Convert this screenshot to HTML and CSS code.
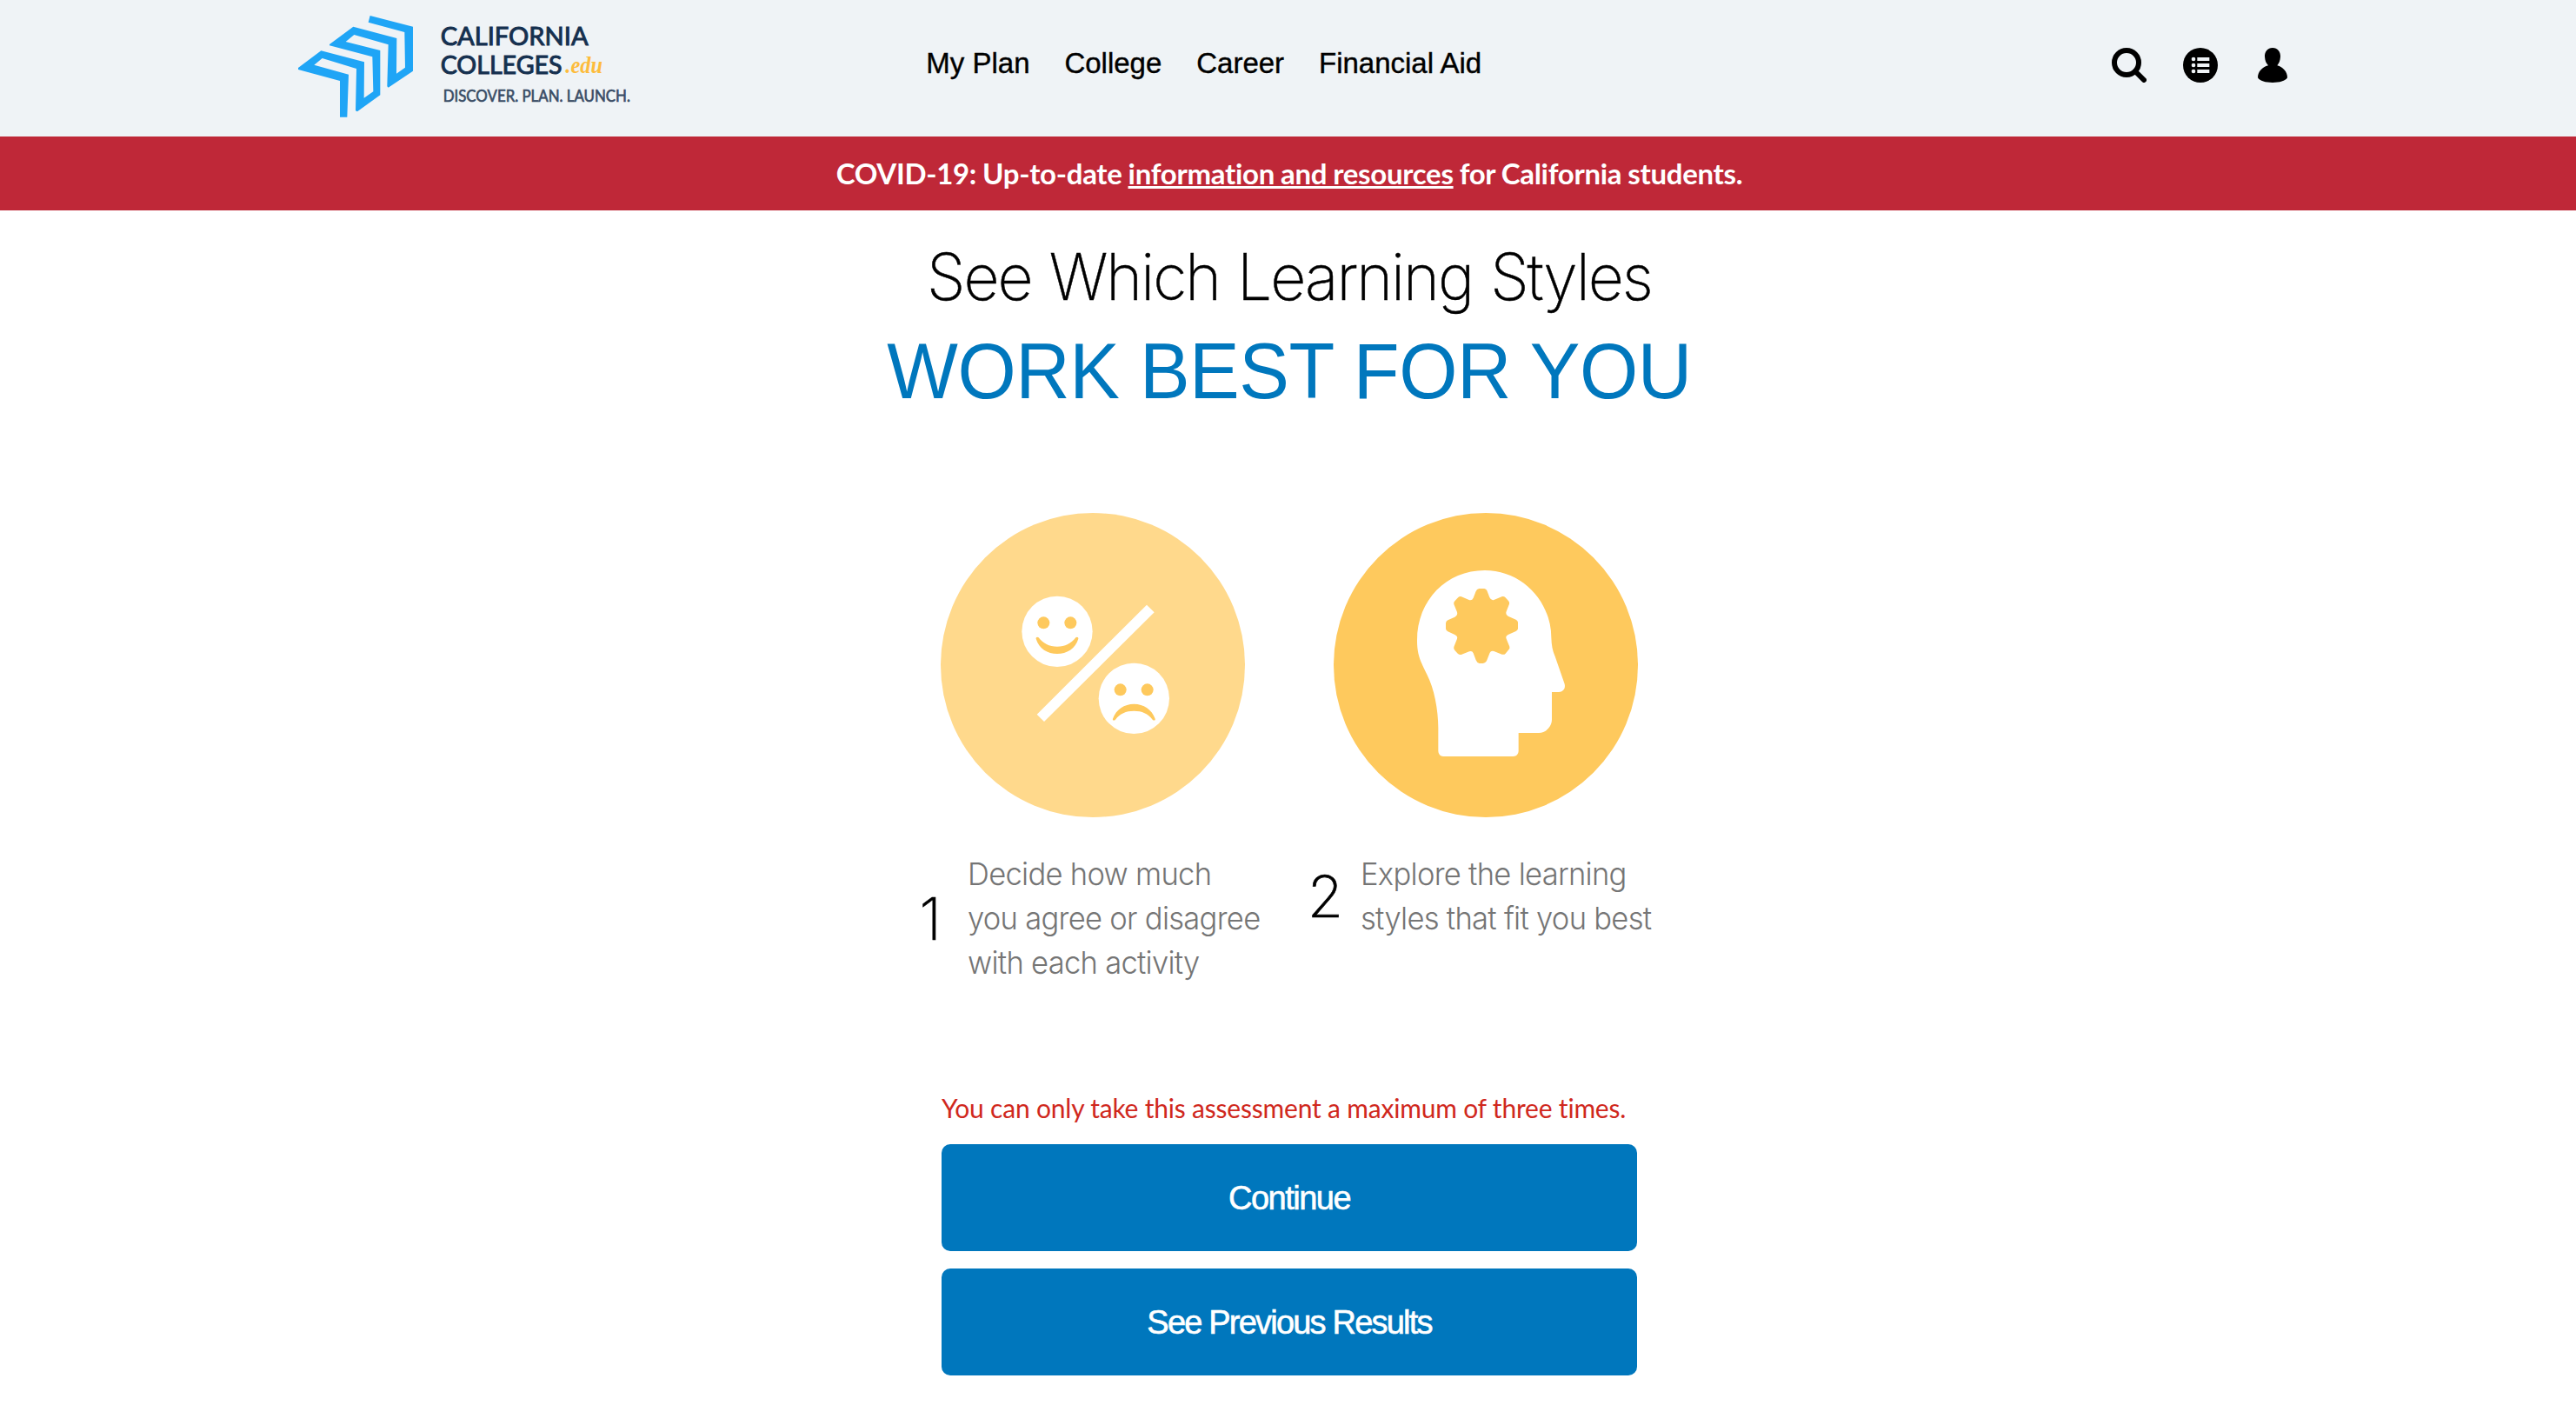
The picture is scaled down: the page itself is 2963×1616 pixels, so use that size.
FILE: index.html
```html
<!DOCTYPE html>
<html lang="en">
<head>
<meta charset="utf-8">
<title>Learning Styles</title>
<link rel="stylesheet" href="styles.css">
</head>
<body>
<header class="header">
  <svg class="logo" viewBox="39 50 1150 360" role="img" aria-label="California Colleges">
    <path class="logo-mark" d="M287 56L435 94V247L350 304L346 300L350 156L232 122L203 146L322 176V330L243 387L237 384L240 239L122 203L94 226L213 259L208 406H183V281L39 242V236L118 177L267 216L266 340L298 318L295 198L147 159V155L229 94L379 134L378 256L408 235L406 113L281 79Z"/>
    <text class="logo-name" x="530" y="157" textLength="510" lengthAdjust="spacingAndGlyphs">CALIFORNIA</text>
    <text class="logo-name" x="530" y="256" textLength="420" lengthAdjust="spacingAndGlyphs">COLLEGES</text>
    <text class="logo-edu" x="961" y="254" textLength="128" lengthAdjust="spacingAndGlyphs">.edu</text>
    <text class="logo-tag" x="539" y="354" textLength="646" lengthAdjust="spacingAndGlyphs">DISCOVER. PLAN. LAUNCH.</text>
  </svg>
  <nav class="nav">
    <a>My Plan</a><a>College</a><a>Career</a><a>Financial Aid</a>
  </nav>
  <div class="tools">
    <svg class="tool" viewBox="0 0 120 120"><circle cx="51" cy="51" r="42" fill="none" stroke="#000" stroke-width="18"/><path d="M81 81L111 111" stroke="#000" stroke-width="18" stroke-linecap="round"/></svg>
    <svg class="tool" viewBox="0 0 120 120"><circle cx="60" cy="60" r="60"/><g fill="#eff3f6"><circle cx="36" cy="39" r="7"/><circle cx="36" cy="60" r="7"/><circle cx="36" cy="81" r="7"/><path d="M49 33H91V45H49ZM49 54H91V66H49ZM49 75H91V87H49Z"/></g></svg>
    <svg class="tool tool-user" viewBox="0 0 102 120"><path d="M51 0C68 0 79 13 78 31C77 45 73 54 67 61C87 66 102 83 102 103C95 115 75 120 51 120S7 115 0 103C0 83 15 66 36 61C29 54 25 45 24 31C23 13 34 0 51 0Z"/></svg>
  </div>
</header>
<div class="banner">COVID-19: Up-to-date <a class="banner-link">information and resources</a> for California students.</div>
<main class="main">
  <h1 class="title"><span class="title-lead">See Which Learning Styles</span><span class="title-strong">WORK BEST FOR YOU</span></h1>
  <div class="steps">
    <section class="step">
      <svg class="step-art" viewBox="0 0 1050 1050">
        <circle cx="525" cy="525" r="525" fill="#ffd98c"/>
        <path fill="#fff" d="M711 317L737 343L357 720L332 695Z"/>
        <g fill="#fff"><circle cx="402" cy="409" r="122"/><circle cx="667" cy="640" r="122"/></g>
        <g fill="#fec95d"><circle cx="355" cy="379" r="21"/><circle cx="448" cy="379" r="21"/><circle cx="620" cy="610" r="21"/><circle cx="713" cy="610" r="21"/>
        <path d="M338 430C354 451 374 461 402 461S450 451 466 430C470 426 476 428 475 434C465 468 435 486 402 486S339 468 329 434C328 428 334 426 338 430Z"/>
        <path d="M603 713C619 692 639 683 667 683S715 692 731 713C735 718 742 716 740 710C729 678 700 659 667 659S605 678 594 710C592 716 599 718 603 713Z"/></g>
      </svg>
      <div class="step-row"><span class="step-num step-num-one">1</span><p class="step-text">Decide how much<br>you agree or disagree<br>with each activity</p></div>
    </section>
    <section class="step">
      <svg class="step-art" viewBox="0 0 1050 1050">
        <circle cx="525" cy="525" r="525" fill="#fec95d"/>
        <path fill="#fff" d="M521 198C651 198 751 306 751 430C752 456 755 476 764 495L797 590C801 607 791 618 777 618H753V712C753 740 730 759 708 759H638V822Q637 839 620 840H378Q362 839 361 822V742C361 680 347 605 322 557C300 512 288 490 288 440C288 300 390 198 521 198Z"/>
        <path fill="#fec95d" d="M502 261H520Q526 262 529 268L538 291Q543 303 553 300L582 288Q588 287 592 291L603 303Q608 308 606 314L596 340Q592 350 602 356L629 368Q635 371 636 377V400Q635 405 629 408L602 420Q592 425 596 434L607 461Q609 467 604 472L593 485Q588 490 581 488L553 477Q543 474 539 482L529 508Q525 518 515 519H503Q495 518 491 508L482 484Q478 474 468 478L440 489Q434 490 429 486L418 474Q413 468 415 462L426 434Q429 425 418 420L394 409Q388 406 387 400V380Q388 373 394 370L418 359Q429 353 426 342L415 315Q413 309 418 304L430 291Q435 287 441 289L467 300Q478 303 482 293L491 270Q494 262 502 261Z"/>
      </svg>
      <div class="step-row"><span class="step-num">2</span><p class="step-text">Explore the learning<br>styles that fit you best</p></div>
    </section>
  </div>
  <div class="actions">
    <p class="notice">You can only take this assessment a maximum of three times.</p>
    <button class="button">Continue</button>
    <button class="button button-tight">See Previous Results</button>
  </div>
</main>
</body>
</html>
```
FILE: styles.css
```css
* { box-sizing: border-box; }
body { margin: 0; background: #fff; color: #000; font-family: "Liberation Sans", Arial, sans-serif; }
.header { display: flex; align-items: flex-start; height: 157px; padding: 16px 332px 0 343px; background: #eff3f6; }
.logo { width: 383.3px; height: 120px; overflow: visible; }
.logo-mark { fill: #1fa5f6; fill-rule: evenodd; }
.logo-name { fill: #15304f; stroke: #15304f; stroke-width: 3px; font: 400 89px Lato, sans-serif; }
.logo-edu { fill: #fdbc3c; font: italic 700 82px "Liberation Serif", serif; }
.logo-tag { fill: #3a4d66; stroke: #3a4d66; stroke-width: 2px; font: 400 57px Lato, sans-serif; }
.nav { display: flex; gap: 39.9px; margin: 37px 0 0 339px; font-size: 33px; line-height: 40px; -webkit-text-stroke: .4px #000; }
.tools { display: flex; gap: 42px; margin: 39px 0 0 auto; }
.tool { width: 40px; height: 40px; }
.tool-user { width: 34px; margin-left: 4px; }
.banner { height: 85px; padding-left: 3px; background: #bf2838; color: #fff; text-align: center; font: 700 33px/85px Lato, sans-serif; letter-spacing: -.3px; word-spacing: -.7px; }
.banner-link { text-decoration: underline; }
.main { display: flex; flex-direction: column; align-items: center; }
.title { display: flex; flex-direction: column; align-items: center; margin: 0; padding-left: 3px; font-weight: 400; }
.title-lead { margin-top: 21px; font: 250 74px/110px Inter, sans-serif; letter-spacing: -2.1px; word-spacing: 2px; transform: scaleX(.965); -webkit-text-stroke: .5px #000; }
.title-strong { font-size: 91px; line-height: 108px; color: #0077bd; letter-spacing: -.5px; transform: scaleX(.95); }
.steps { display: grid; grid-template-columns: 452px 452px; margin: 109px 0 0 3px; }
.step { display: flex; flex-direction: column; align-items: center; }
.step-art { width: 350px; height: 350px; }
.step-row { display: flex; align-items: center; width: 100%; margin-top: 40px; }
.step-num { width: 62px; text-align: right; font: 200 67px/70px Inter, sans-serif; -webkit-text-stroke: .7px #000; }
.step-num-one { padding-right: 10px; }
.step-text { margin: 0 0 0 20px; color: #757575; font: 300 36px/51px Inter, sans-serif; letter-spacing: -.75px; white-space: nowrap; transform: scaleX(.96); transform-origin: left; }
.actions { display: flex; flex-direction: column; width: 800px; margin-left: 3px; }
.notice { margin: 121px 0 22px; color: #d0281d; font: 400 30px/40px Lato, sans-serif; letter-spacing: -.2px; white-space: nowrap; }
.button { height: 123px; margin: 0 0 20px; padding: 2px 0 0; border: 0; border-radius: 10px; background: #0077bd; color: #fff; font: 400 38px "Liberation Sans", Arial, sans-serif; letter-spacing: -1.5px; -webkit-text-stroke: .6px #fff; }
.button-tight { letter-spacing: -1.8px; }
```
